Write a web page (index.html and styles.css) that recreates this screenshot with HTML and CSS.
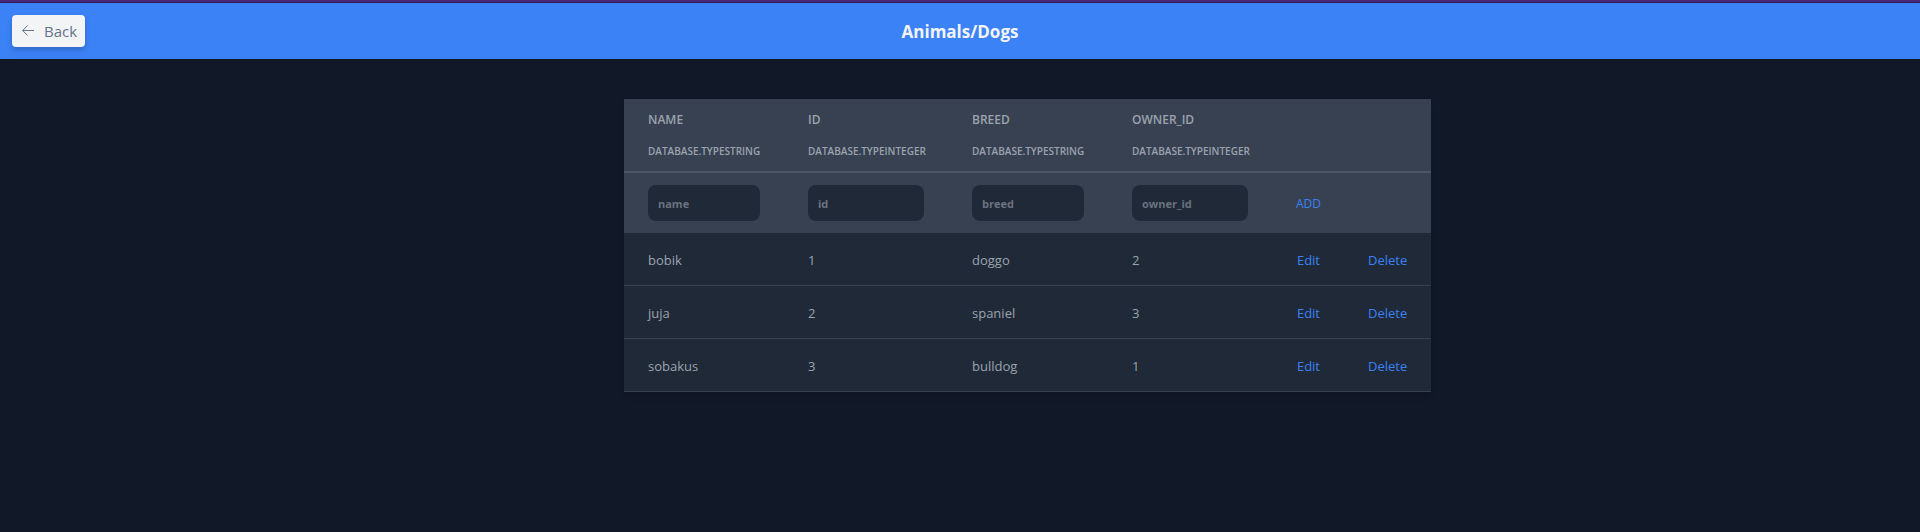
FILE: index.html
```html
<!DOCTYPE html>
<html lang="en">
<head>
<meta charset="utf-8">
<title>Animals/Dogs</title>
<link rel="stylesheet" href="styles.css">
</head>
<body>
<header class="topbar">
  <button class="back" type="button">
    <svg class="back-icon" viewBox="0 0 12 12" aria-hidden="true"><path d="M5.5 0.5 0.7 5.5l4.8 5M0.7 5.5H12"/></svg>
    <span>Back</span>
  </button>
  <h1 class="title">Animals/Dogs</h1>
</header>
<main class="content">
  <table class="records">
    <colgroup>
      <col class="col-string"><col class="col-integer"><col class="col-string"><col class="col-integer"><col class="col-edit"><col class="col-delete">
    </colgroup>
    <thead>
      <tr class="columns">
        <th scope="col">name<span class="type">Database.TypeString</span></th>
        <th scope="col">id<span class="type">Database.TypeInteger</span></th>
        <th scope="col">breed<span class="type">Database.TypeString</span></th>
        <th scope="col">owner_id<span class="type">Database.TypeInteger</span></th>
        <td></td>
        <td></td>
      </tr>
      <tr class="new-record">
        <td><input class="field" type="text" placeholder="name" aria-label="name"></td>
        <td><input class="field" type="text" placeholder="id" aria-label="id"></td>
        <td><input class="field" type="text" placeholder="breed" aria-label="breed"></td>
        <td><input class="field" type="text" placeholder="owner_id" aria-label="owner_id"></td>
        <td><button class="add" type="button">ADD</button></td>
        <td></td>
      </tr>
    </thead>
    <tbody>
      <tr><td>bobik</td><td>1</td><td>doggo</td><td>2</td><td class="action"><a href="#">Edit</a></td><td class="action"><a href="#">Delete</a></td></tr>
      <tr><td>juja</td><td>2</td><td>spaniel</td><td>3</td><td class="action"><a href="#">Edit</a></td><td class="action"><a href="#">Delete</a></td></tr>
      <tr><td>sobakus</td><td>3</td><td>bulldog</td><td>1</td><td class="action"><a href="#">Edit</a></td><td class="action"><a href="#">Delete</a></td></tr>
    </tbody>
  </table>
</main>
</body>
</html>
```
FILE: styles.css
```css
* { box-sizing: border-box; }

body {
  margin: 0;
  min-height: 100vh;
  border-top: 2px solid #4a2a78;
  background: #111827;
  color: #9ca3af;
  font-family: "Open Sans", "Noto Sans", sans-serif;
  font-size: 13px;
  line-height: 20px;
}

button, input { font-family: inherit; }

.topbar {
  display: grid;
  grid-template-columns: 1fr auto 1fr;
  align-items: center;
  padding: 12px;
  border-top: 1px solid #33165a;
  background: #3b82f6;
}

.back {
  display: flex;
  align-items: center;
  justify-content: space-between;
  justify-self: start;
  gap: 10px;
  height: 32px;
  padding: 0 8px 0 10px;
  border: 0;
  border-radius: 4px;
  background: #f3f4f6;
  box-shadow: 0 4px 6px rgba(0, 0, 0, 0.1), 0 2px 4px rgba(0, 0, 0, 0.1);
  color: #64748b;
  font-size: 15px;
  line-height: 24px;
}

.back-icon {
  width: 12px;
  height: 12px;
  fill: none;
  stroke: #64748b;
}

.title {
  margin: 0;
  padding-top: 2px;
  color: #f3f4f6;
  font-size: 17px;
  font-weight: 700;
  line-height: 28px;
}

.content { padding: 40px 24px 40px 32.5%; }

.records {
  border-collapse: collapse;
  table-layout: fixed;
  width: 807px;
  background: #1f2937;
  box-shadow: 0 4px 6px rgba(0, 0, 0, 0.1);
  text-align: left;
}

.col-string { width: 160px; }
.col-integer { width: 164px; }
.col-edit { width: 72px; }
.col-delete { width: 87px; }

th, td { padding: 0 24px; }

thead { background: #374151; }

.columns { border-bottom: 2px solid #4b5563; }

.columns th {
  padding-top: 13px;
  padding-bottom: 12px;
  font-size: 12px;
  font-weight: 600;
  line-height: 16px;
  text-transform: uppercase;
}

.type {
  display: block;
  margin-top: 15px;
  font-size: 10px;
  font-weight: 600;
}

.new-record td {
  padding-top: 12px;
  padding-bottom: 12px;
}

.field {
  display: block;
  width: 100%;
  height: 36px;
  padding: 0 10px;
  border: 0;
  border-radius: 8px;
  background: #1f2937;
  color: #9ca3af;
  font-size: 11px;
  font-weight: 700;
}

.field::placeholder { color: #6b7280; }

.add {
  padding: 0;
  border: 0;
  background: none;
  color: #3b82f6;
  font-size: 12px;
}

tbody tr { border-bottom: 1px solid #374151; }

tbody td {
  padding-top: 17px;
  padding-bottom: 15px;
}

.action { text-align: right; }

.action a {
  color: #3b82f6;
  text-decoration: none;
}
```
